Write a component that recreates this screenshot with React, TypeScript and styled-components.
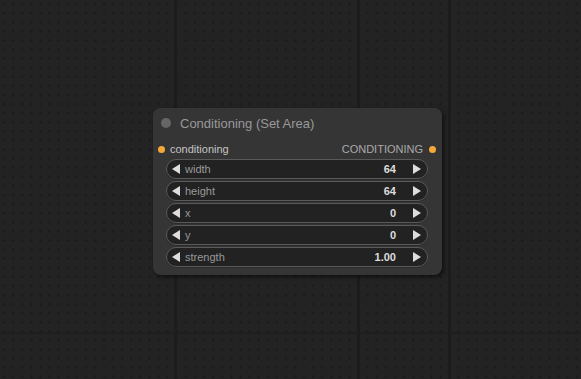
import React from "react";
import styled, { createGlobalStyle } from "styled-components";

const Global = createGlobalStyle`
  html, body { margin: 0; padding: 0; background: #222; }
  body { font-family: Arial, "Liberation Sans", sans-serif; }
`;

const Canvas = styled.div`
  position: relative;
  width: 581px;
  height: 379px;
  overflow: hidden;
  background-color: #232323;
  background-image: radial-gradient(circle at 4px 4px, #1a1a1a 0.9px, transparent 1.3px);
  background-size: 9.1px 9.1px;
`;

const VLine = styled.div<{ $x: number }>`
  position: absolute;
  top: 0;
  bottom: 0;
  left: ${(p) => p.$x}px;
  width: 3px;
  background: #1c1c1c;
`;

const HLine = styled.div<{ $y: number }>`
  position: absolute;
  left: 0;
  right: 0;
  top: ${(p) => p.$y}px;
  height: 2px;
  background: #1e1e1e;
`;

const Node = styled.div`
  position: absolute;
  left: 153px;
  top: 108px;
  width: 289px;
  height: 167px;
  border-radius: 8px;
  background: #353535;
  box-shadow: 2px 2px 4px rgba(0, 0, 0, 0.55);
  display: flex;
  flex-direction: column;
`;

const Title = styled.div`
  height: 30px;
  display: flex;
  align-items: center;
  padding-left: 8px;
  gap: 9px;
  border-radius: 8px 8px 0 0;
  background: #353535;
  color: #999;
  font-size: 13px;
`;

const Dot = styled.span<{ $color: string; $size: number }>`
  display: inline-block;
  width: ${(p) => p.$size}px;
  height: ${(p) => p.$size}px;
  border-radius: 50%;
  background: ${(p) => p.$color};
  flex: none;
`;

const SlotRow = styled.div`
  height: 20px;
  display: flex;
  align-items: center;
  padding: 0 6px 0 5px;
  font-size: 11px;
  margin-top: 1px;
`;

const SlotName = styled.span<{ $right?: boolean }>`
  flex: 1;
  text-align: ${(p) => (p.$right ? "right" : "left")};
  padding: ${(p) => (p.$right ? "0 6px 0 0" : "0 0 0 5px")};
  color: ${(p) => (p.$right ? "#aaa" : "#c4c4c4")};
`;

const Widgets = styled.div`
  display: flex;
  flex-direction: column;
  gap: 2px;
  padding: 0 14px 0 13px;
`;

const Widget = styled.div`
  height: 18px;
  border: 1px solid #5a5a5a;
  border-radius: 10px;
  background: #222;
  display: flex;
  align-items: center;
  padding: 0 6px 0 5px;
  font-size: 11px;
  box-shadow: 0 1px 0 #2a2a2a;
`;

const Arrow = styled.span<{ $dir: "l" | "r" }>`
  width: 0;
  height: 0;
  flex: none;
  border-top: 5px solid transparent;
  border-bottom: 5px solid transparent;
  ${(p) =>
    p.$dir === "l"
      ? "border-right: 8px solid #ddd;"
      : "border-left: 8px solid #ddd;"}
`;

const Label = styled.span`
  flex: 1;
  color: #999;
  padding-left: 5px;
`;

const Value = styled.span`
  color: #ddd;
  font-weight: bold;
  padding-right: 17px;
`;

const widgets = [
  { label: "width", value: "64" },
  { label: "height", value: "64" },
  { label: "x", value: "0" },
  { label: "y", value: "0" },
  { label: "strength", value: "1.00" },
];

export default function App() {
  return (
    <>
      <Global />
      <Canvas>
        <VLine $x={174} />
        <VLine $x={357} />
        <VLine $x={448} />
        <HLine $y={332} />
        <Node>
          <Title>
            <Dot $color="#666" $size={10} />
            <span>Conditioning (Set Area)</span>
          </Title>
          <SlotRow>
            <Dot $color="#f4a83a" $size={7} />
            <SlotName>conditioning</SlotName>
            <SlotName $right>CONDITIONING</SlotName>
            <Dot $color="#f4a83a" $size={7} />
          </SlotRow>
          <Widgets>
            {widgets.map((w) => (
              <Widget key={w.label}>
                <Arrow $dir="l" />
                <Label>{w.label}</Label>
                <Value>{w.value}</Value>
                <Arrow $dir="r" />
              </Widget>
            ))}
          </Widgets>
        </Node>
      </Canvas>
    </>
  );
}
